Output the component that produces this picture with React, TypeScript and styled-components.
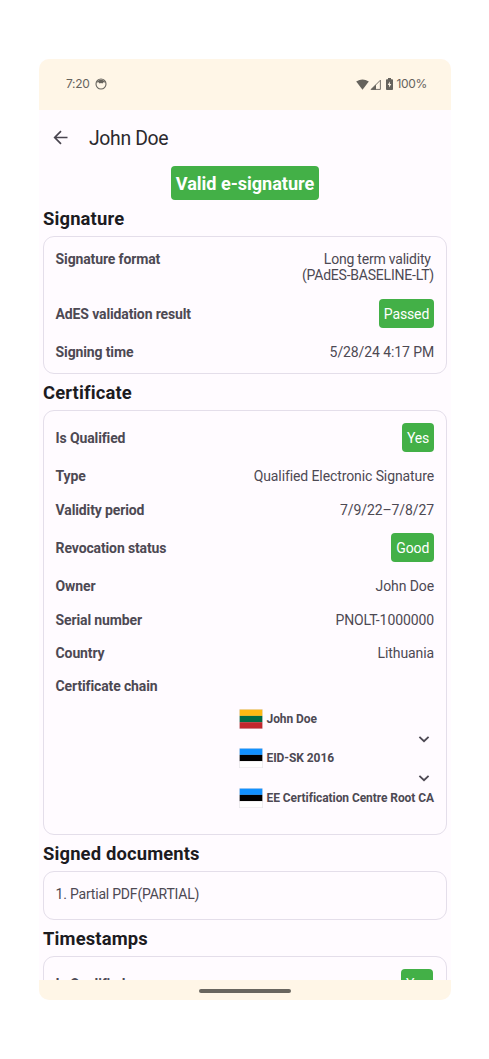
import React from 'react';
import styled, { createGlobalStyle } from 'styled-components';

const Global = createGlobalStyle`
  * { box-sizing: border-box; }
  body { margin: 0; background: #fff; font-family: Roboto, "Liberation Sans", sans-serif; }
`;

const Page = styled.div`
  display: flex;
  justify-content: center;
  width: 489px;
  height: 1059px;
  padding: 59px 0 0 1px;
  overflow: hidden;
`;

const Phone = styled.div`
  display: flex;
  flex-direction: column;
  width: 412px;
  height: 941px;
  border-radius: 10px;
  overflow: hidden;
  background: #fffbff;
`;

const StatusBar = styled.header`
  display: flex;
  align-items: center;
  justify-content: space-between;
  flex: none;
  height: 50.5px;
  padding: 0 24px 0 27px;
  background: #fff6e7;
  color: #66635d;
  font: 400 12px/16px Inter, Roboto, sans-serif;
  letter-spacing: -0.3px;
`;

const StatusGroup = styled.div`
  display: flex;
  align-items: center;
`;

const StatusIcon = styled.svg<{ $before?: number; $after?: number }>`
  flex: none;
  margin: 0 ${(p) => p.$after ?? 0}px 0 ${(p) => p.$before ?? 0}px;
`;

const AppBar = styled.div`
  display: flex;
  align-items: center;
  flex: none;
  height: 56px;
  padding-left: 13px;
  gap: 19px;
`;

const Title = styled.h1`
  margin: 3px 0 0;
  color: #2b292d;
  font-size: 19.4px;
  font-weight: 400;
  letter-spacing: -0.35px;
  line-height: 24px;
`;

const Content = styled.main`
  display: flex;
  flex-direction: column;
  flex: 1;
  min-height: 0;
  padding: 0 4px;
  overflow: hidden;
`;

const Badge = styled.div`
  align-self: center;
  flex: none;
  height: 34px;
  padding: 0 4.5px;
  border-radius: 4px;
  background: #43b047;
  color: #fff;
  font-size: 18.1px;
  font-weight: 700;
  letter-spacing: -0.04px;
  line-height: 35px;
`;

const Heading = styled.h2`
  flex: none;
  height: 36.4px;
  margin: 0;
  color: #1c1b1f;
  font-size: 18.4px;
  font-weight: 700;
  letter-spacing: 0.15px;
  line-height: 37px;
`;

const Card = styled.section<{ $height: number; $top?: number; $inset?: number }>`
  flex: none;
  height: ${(p) => p.$height}px;
  padding: ${(p) => p.$top ?? 5}px ${(p) => p.$inset ?? 12}px 0 11.6px;
  border: 1px solid #e4deea;
  border-radius: 11px;
  color: #4d4953;
  font-size: 14px;
  line-height: 16.6px;
`;

const Row = styled.div<{ $height?: number }>`
  display: flex;
  align-items: center;
  justify-content: space-between;
  height: ${(p) => p.$height ?? 33.4}px;
`;

const Label = styled.span<{ $top?: boolean }>`
  align-self: ${(p) => (p.$top ? 'flex-start' : 'center')};
  padding-top: ${(p) => (p.$top ? 9 : 1.2)}px;
  font-weight: 700;
  letter-spacing: -0.13px;
`;

const Value = styled.span<{ $tight?: boolean }>`
  padding-top: 1.2px;
  text-align: right;
  white-space: pre;
  letter-spacing: ${(p) => (p.$tight ? -0.21 : -0.1)}px;
`;

const Pill = styled.span`
  height: 29px;
  padding: 0 4.8px;
  border-radius: 4px;
  background: #43b047;
  color: #fff;
  letter-spacing: -0.12px;
  line-height: 30px;
`;

const Chain = styled.div`
  display: flex;
  flex-direction: column;
  width: 195px;
  margin: 6px 0 0 auto;
`;

const Link = styled.div`
  display: flex;
  align-items: center;
  gap: 3.5px;
  height: 20px;
  font-size: 12px;
  font-weight: 700;
  letter-spacing: -0.07px;
  white-space: nowrap;
`;

const FlagIcon = styled.svg`
  flex: none;
`;

const Chevron = styled.svg`
  display: block;
  align-self: flex-end;
  margin-right: 3px;
`;

const Bottom = styled.footer`
  display: flex;
  align-items: center;
  justify-content: center;
  flex: none;
  height: 20px;
  padding-top: 1px;
  background: #fff6e7;
`;

const Handle = styled.div`
  width: 92px;
  height: 4px;
  border-radius: 2px;
  background: #69665f;
`;

const FLAGS = {
  lt: ['#fdb913', '#006a44', '#c1272d'],
  ee: ['#1291ff', '#000000', '#ffffff'],
};

function Flag({ country }: { country: keyof typeof FLAGS }) {
  return (
    <FlagIcon width="24" height="20" viewBox="0 0 24 20">
      <rect x="0.2" y="0.2" width="23.6" height="19.8" fill="#e3dfe5" />
      {FLAGS[country].map((c, i) => (
        <rect key={c} x="0.7" y={0.6 + i * 6.3} width="22.6" height="6.3" fill={c} />
      ))}
    </FlagIcon>
  );
}

function Down() {
  return (
    <Chevron width="14" height="19.7" viewBox="0 0 14 19.7">
      <path d="M2.4 7.8 7 12.2l4.6-4.4" fill="none" stroke="#4d4953" strokeWidth="1.8" />
    </Chevron>
  );
}

function Field({ label, value, pill }: { label: string; value?: string; pill?: boolean }) {
  return (
    <Row $height={pill ? 43.2 : 33.4}>
      <Label>{label}</Label>
      {value && (pill ? <Pill>{value}</Pill> : <Value>{value}</Value>)}
    </Row>
  );
}

export default function App() {
  return (
    <>
      <Global />
      <Page>
        <Phone>
          <StatusBar>
            <StatusGroup>
              7:20
              <StatusIcon $before={5} width="12" height="12" viewBox="0 0 12 12">
                <circle cx="6" cy="6" r="5" fill="none" stroke="#66635d" strokeWidth="1.1" />
                <path d="M1.8 4.4C2.6 0.8 9.4 0.8 10.2 4.4L8.4 4.2 7.4 5.4 6 4.9 4.6 5.4 3.6 4.2Z" fill="#66635d" />
              </StatusIcon>
            </StatusGroup>
            <StatusGroup>
              <StatusIcon $after={1} width="13" height="11" viewBox="0 0 13 11">
                <path d="M0.2 2.6 Q6.5 -1.8 12.8 2.6 L6.5 10.8Z" fill="#66635d" />
              </StatusIcon>
              <StatusIcon $after={5} width="11" height="11" viewBox="0 0 11 11">
                <path d="M1.2 10.4 H10.4 V1.2Z" fill="none" stroke="#66635d" strokeWidth="0.9" />
                <path d="M0.6 10.8 L6 5.4 V10.8Z" fill="#66635d" />
              </StatusIcon>
              <StatusIcon $after={3.5} width="7" height="12" viewBox="0 0 7 12">
                <path d="M2 0h3v1.3h1.2q.8 0 .8.8v9q0 .9-.8.9H.8q-.8 0-.8-.9v-9q0-.8.8-.8H2Z" fill="#66635d" />
                <path d="M3.8 3.6 1.7 7h1.4v2.6L5.3 6H3.8Z" fill="#fff6e7" />
              </StatusIcon>
              100%
            </StatusGroup>
          </StatusBar>
          <AppBar>
            <svg width="18" height="18" viewBox="0 0 18 18">
              <path d="M15.5 8.5H3M9 2.2 2.7 8.5 9 14.8" fill="none" stroke="#49454f" strokeWidth="1.7" />
            </svg>
            <Title>John Doe</Title>
          </AppBar>
          <Content>
            <Badge>Valid e-signature</Badge>
            <Heading>Signature</Heading>
            <Card $height={137.8}>
              <Row $height={50}>
                <Label $top>Signature format</Label>
                <Value $tight>{'Long term validity \n(PAdES-BASELINE-LT)'}</Value>
              </Row>
              <Field label="AdES validation result" value="Passed" pill />
              <Field label="Signing time" value="5/28/24 4:17 PM" />
            </Card>
            <Heading>Certificate</Heading>
            <Card $height={424.7}>
              <Field label="Is Qualified" value="Yes" pill />
              <Field label="Type" value="Qualified Electronic Signature" />
              <Field label="Validity period" value="7/9/22–7/8/27" />
              <Field label="Revocation status" value="Good" pill />
              <Field label="Owner" value="John Doe" />
              <Field label="Serial number" value="PNOLT-1000000" />
              <Field label="Country" value="Lithuania" />
              <Field label="Certificate chain" />
              <Chain>
                <Link><Flag country="lt" />John Doe</Link>
                <Down />
                <Link><Flag country="ee" />EID-SK 2016</Link>
                <Down />
                <Link><Flag country="ee" />EE Certification Centre Root CA</Link>
              </Chain>
            </Card>
            <Heading>Signed documents</Heading>
            <Card $height={48.6}>
              <Row><Value $tight>1. Partial PDF(PARTIAL)</Value></Row>
            </Card>
            <Heading>Timestamps</Heading>
            <Card $height={100} $inset={13}>
              <Field label="Is Qualified" value="Yes" pill />
            </Card>
          </Content>
          <Bottom><Handle /></Bottom>
        </Phone>
      </Page>
    </>
  );
}
